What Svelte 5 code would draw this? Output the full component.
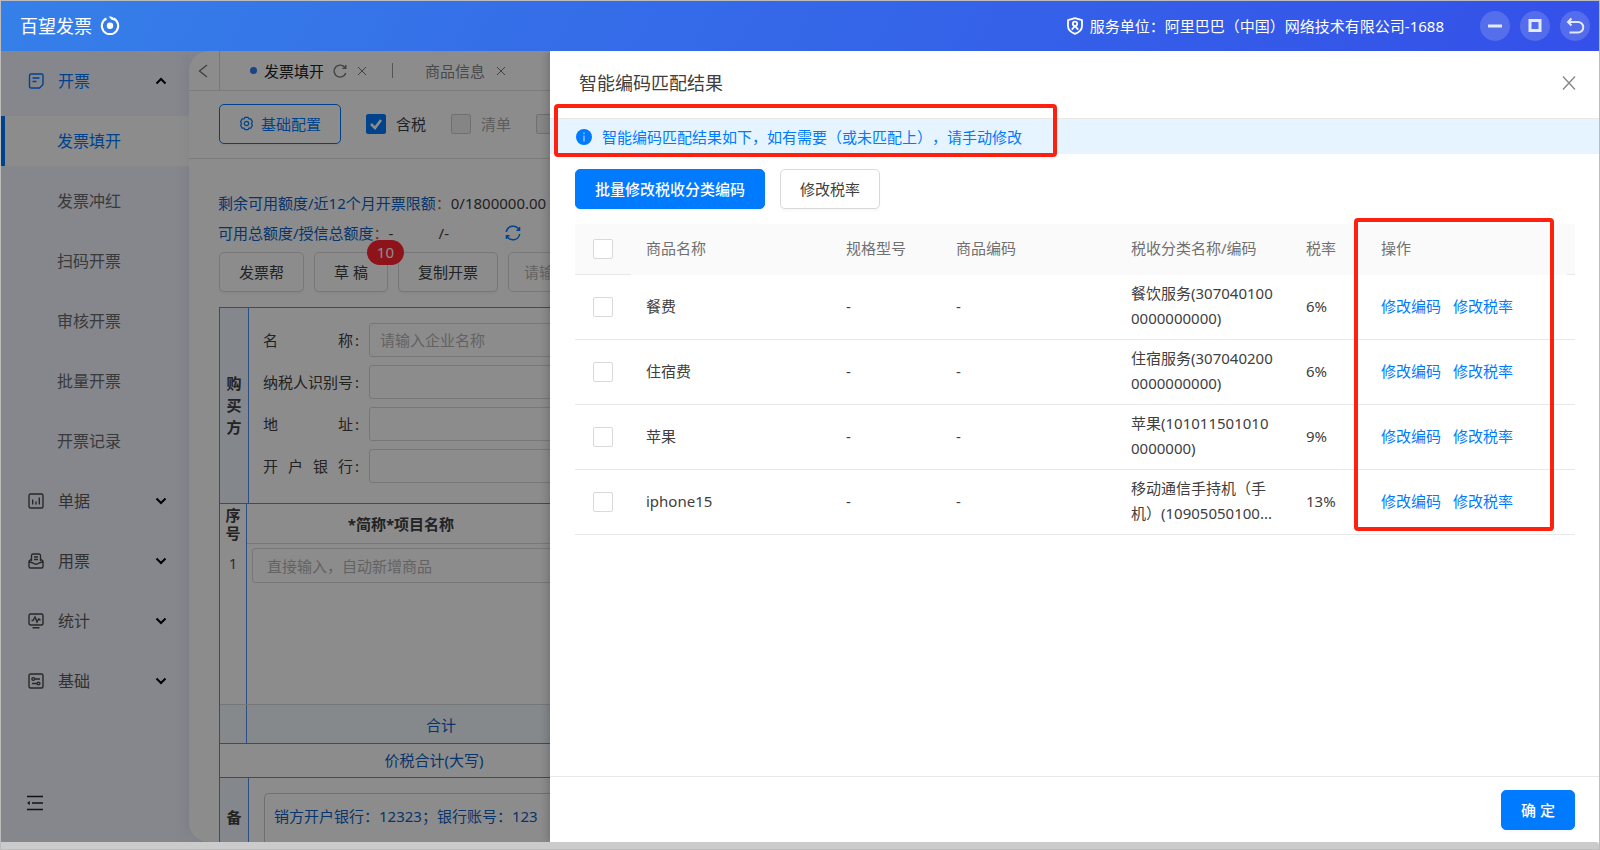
<script>
  const children = ['发票填开', '发票冲红', '扫码开票', '审核开票', '批量开票', '开票记录'];
  const groups = [
    { id: 'bill', label: '单据' },
    { id: 'ticket', label: '用票' },
    { id: 'stats', label: '统计' },
    { id: 'base', label: '基础' }
  ];
  const buyerFields = [
    { id: 'buyer-name', label: '名称', hint: '请输入企业名称' },
    { id: 'buyer-tax', label: '纳税人识别号', hint: '' },
    { id: 'buyer-addr', label: '地址', hint: '' },
    { id: 'buyer-bank', label: '开户银行', hint: '' }
  ];
  const rows = [
    { name: '餐费', code: '餐饮服务(3070401000000000000)', rate: '6%' },
    { name: '住宿费', code: '住宿服务(3070402000000000000)', rate: '6%' },
    { name: '苹果', code: '苹果(1010115010100000000)', rate: '9%' },
    { name: 'iphone15', code: '移动通信手持机（手机）(10905050100...', rate: '13%' }
  ];
</script>

<div class="window">
  <header class="topbar">
    <h1 class="brand">百望发票</h1>
    <svg class="brand-mark" viewBox="0 0 20 20" width="20" height="20">
      <path d="M6.500 2.500A8.200 8.200 0 1 0 13.500 2.500" fill="none" stroke="#fff" stroke-width="2" />
      <path d="M8.600 0.600c3 -.6 5.600.6 6 3.800l-3-.6z" fill="#fff" />
      <circle cx="10" cy="9.800" r="3.200" fill="#fff" />
    </svg>
    <div class="tenant">
      <svg viewBox="0 0 18 18" width="18" height="18" fill="none" stroke="#fff" stroke-width="1.800">
        <path d="M9 1.200 16 3.200V9c0 3.800-3 6.400-7 7.800C5 15.400 2 12.800 2 9V3.200z" stroke-linejoin="round" />
        <circle cx="9" cy="6.800" r="2.200" />
        <path d="M5.800 12.600 9 9l3.200 3.600" />
      </svg>
      <span>服务单位：阿里巴巴（中国）网络技术有限公司-1688</span>
    </div>
    <div class="win-actions">
      <button aria-label="最小化">
        <svg viewBox="0 0 30 30"><path d="M8 15h14" stroke-width="3" /></svg>
      </button>
      <button aria-label="最大化">
        <svg viewBox="0 0 30 30"><rect x="10" y="9.500" width="10" height="10" stroke-width="3" /></svg>
      </button>
      <button aria-label="返回">
        <svg viewBox="0 0 30 30"><path d="M11.500 7.500 8 11l3.500 3.500M8.500 11H18a5 5 0 0 1 0 10.500H9.500" stroke-width="2" /></svg>
      </button>
    </div>
  </header>

  <div class="body">
    <nav class="sidebar">
      <a class="group open" href="#invoice">
        <svg class="gicon" viewBox="0 0 16 16">
          <path d="M3 1h10.500a1.500 1.500 0 0 1 1.500 1.500v9L11.500 15H3a1.500 1.500 0 0 1-1.500-1.500v-11A1.500 1.500 0 0 1 3 1zM4.500 5h7M4.500 8.500h4" />
        </svg>
        <span>开票</span>
        <svg class="chev" viewBox="0 0 12 12"><path d="M1.500 8.500 6 4l4.500 4.500" /></svg>
      </a>
      {#each children as c, i}
        <a class="child" class:active={i === 0} href="#c{i}">{c}</a>
      {/each}
      {#each groups as g}
        <a class="group" href="#{g.id}">
          <svg class="gicon" viewBox="0 0 16 16">
            {#if g.id === 'bill'}
              <rect x="1" y="1" width="14" height="14" rx="1.500" />
              <path d="M4.700 6.500v5M8 8.500v3M11.300 4.500v7" />
            {:else if g.id === 'ticket'}
              <path d="M3.500 8V2.500a1.500 1.500 0 0 1 1.500-1.500h6a1.500 1.500 0 0 1 1.500 1.500V8M6 4h4M6 6.500h4" />
              <path d="M3.500 6 1 8v5.500A1.500 1.500 0 0 0 2.500 15h11a1.500 1.500 0 0 0 1.500-1.500V8l-2.500-2M1 8.500l4 1.500q3 2.500 6 0l4-1.500" />
            {:else if g.id === 'stats'}
              <rect x="1" y="1" width="14" height="11" rx="1.500" />
              <path d="M3.500 7.500h1.500L7 4l2 5 1.500-3 2 1M4.500 14.700h7" />
            {:else}
              <rect x="1" y="1" width="14" height="14" rx="1.500" />
              <circle cx="5.300" cy="6" r="1.400" /><path d="M6.700 6H12M4 10.500h5" /><circle cx="10.500" cy="10.500" r="1.400" />
            {/if}
          </svg>
          <span>{g.label}</span>
          <svg class="chev" viewBox="0 0 12 12"><path d="M1.500 3.500 6 8l4.500-4.500" /></svg>
        </a>
      {/each}
      <button class="fold" aria-label="收起菜单">
        <svg viewBox="0 0 16 16" width="16" height="16" fill="none" stroke="#222" stroke-width="1.400">
          <path d="M0 1.500h16M5 8h11M0 14.500h16" /><path d="M2.800 6v4L0 8z" fill="#222" stroke="none" />
        </svg>
      </button>
    </nav>

    <main class="content">
      <div class="tabs">
        <button class="back" aria-label="后退">
          <svg viewBox="0 0 10 14" width="10" height="14"><path d="M9 1 1.500 7 9 13" /></svg>
        </button>
        <div class="tab current">
          <i class="dot"></i>
          <span>发票填开</span>
          <svg viewBox="0 0 16 16" width="16" height="16"><path d="M13.800 10A6 6 0 1 1 13 4.600M13.800 2v3.400h-3.400" /></svg>
          <svg class="x" viewBox="0 0 10 10" width="10" height="10"><path d="M1 1l8 8M9 1 1 9" /></svg>
        </div>
        <i class="sep"></i>
        <div class="tab">
          <span>商品信息</span>
          <svg class="x" viewBox="0 0 10 10" width="10" height="10"><path d="M1 1l8 8M9 1 1 9" /></svg>
        </div>
      </div>

      <div class="toolbar">
        <button class="btn config">
          <svg viewBox="0 0 16 16" width="15" height="15" fill="none" stroke="#007aff" stroke-width="1.300">
            <path d="M6.200 1.500h3.600l.8 1.700 2-.1 1.700 3-1 1.900 1 1.900-1.700 3-2-.1-.8 1.700H6.200l-.8-1.700-2 .1-1.700-3 1-1.900-1-1.900 1.700-3 2 .1z" stroke-linejoin="round" />
            <circle cx="8" cy="8" r="2.300" />
          </svg>
          基础配置
        </button>
        <label class="opt"><input type="checkbox" checked />含税</label>
        <label class="opt off"><input type="checkbox" disabled />清单</label>
        <label class="opt off"><input type="checkbox" disabled aria-label="其他" /></label>
      </div>

      <div class="quota">
        <p><b>剩余可用额度/近12个月开票限额</b><em>：</em>0/1800000.00</p>
        <p>
          <b>可用总额度/授信总额度</b><em>：</em><span class="avail">-</span><span class="credit">/-</span>
          <svg viewBox="0 0 16 16" width="16" height="16" fill="none" stroke="#007aff" stroke-width="1.500">
            <path d="M1.300 7A6.800 6.800 0 0 1 14 4.800M14.700 9A6.800 6.800 0 0 1 2 11.200" /><path d="M14.500 2v3.200h-3M1.500 14v-3.200h3" />
          </svg>
        </p>
      </div>

      <div class="actions">
        <button class="btn">发票帮</button>
        <button class="btn draft">草 稿<span class="badge">10</span></button>
        <button class="btn">复制开票</button>
        <input class="field" placeholder="请输入" aria-label="搜索" />
      </div>

      <div class="invoice">
        <section class="party">
          <div class="side"><span>购买方</span></div>
          <div class="fields">
            {#each buyerFields as f}
              <div class="frow">
                <label for={f.id}>{f.label}</label><span class="colon">:</span>
                <input class="field" id={f.id} placeholder={f.hint} />
              </div>
            {/each}
          </div>
        </section>
        <section class="items">
          <div class="num"><strong>序号</strong><span>1</span></div>
          <div class="goods">
            <div class="ghead"><span>*简称*项目名称</span></div>
            <div class="gline"><input class="field" placeholder="直接输入，自动新增商品" aria-label="项目名称" /></div>
          </div>
        </section>
        <section class="total"><div class="num"></div><div class="sum"><span>合计</span></div></section>
        <section class="caps"><span>价税合计(大写)</span></section>
        <section class="remark">
          <div class="side"><span>备</span></div>
          <div class="note"><textarea aria-label="备注">销方开户银行：12323；银行账号：123</textarea></div>
        </section>
      </div>
    </main>

    <div class="mask"></div>

    <aside class="drawer">
      <div class="dhead">
        <h2>智能编码匹配结果</h2>
        <button aria-label="关闭">
          <svg viewBox="0 0 14 14" width="14" height="14"><path d="M1 .5l12 13M13 .5 1 13.500" /></svg>
        </button>
      </div>
      <div class="alert">
        <svg viewBox="0 0 16 16" width="16" height="16"><circle cx="8" cy="8" r="8" fill="#007aff" /><path d="M8 3.500v1.500M8 6.500v6" stroke="#8cc4ff" stroke-width="1.500" /></svg>
        <span>智能编码匹配结果如下，如有需要（或未匹配上），请手动修改</span>
      </div>
      <div class="dbody">
        <div class="dbtns">
          <button class="btn primary">批量修改税收分类编码</button>
          <button class="btn">修改税率</button>
        </div>
        <table>
          <colgroup>
            <col class="c-check" /><col /><col class="c-spec" /><col class="c-code" /><col class="c-code" /><col class="c-rate" /><col class="c-ops" /><col class="c-end" />
          </colgroup>
          <thead>
            <tr>
              <th class="pick"><input type="checkbox" aria-label="全选" /></th>
              <th>商品名称</th><th>规格型号</th><th>商品编码</th><th>税收分类名称/编码</th><th>税率</th><th>操作</th><th class="end"></th>
            </tr>
          </thead>
          <tbody>
            {#each rows as r}
              <tr>
                <td class="pick"><input type="checkbox" aria-label={r.name} /></td>
                <td>{r.name}</td><td>-</td><td>-</td>
                <td class="code">{r.code}</td>
                <td>{r.rate}</td>
                <td><div class="links"><a href="#code">修改编码</a><a href="#rate">修改税率</a></div></td>
                <td class="end"></td>
              </tr>
            {/each}
          </tbody>
        </table>
      </div>
      <div class="dfoot"><button class="btn primary">确 定</button></div>
      <div class="mark mark-alert"></div>
      <div class="mark mark-ops"></div>
    </aside>
  </div>
  <div class="scroll"></div>
</div>

<style>
  :global(body) { margin: 0; }
  .window, .window :is(button, input, textarea) {
    font-family: "Noto Sans", "Noto Sans CJK SC", sans-serif;
    font-size: 15px;
    text-spacing-trim: space-all;
  }
  .window {
    box-sizing: border-box;
    min-height: 100vh;
    display: flex;
    flex-direction: column;
    border: 1px solid #bcbcbc;
    line-height: 24px;
    color: #404040;
  }
  .window * { box-sizing: border-box; }
  h1, h2, p { margin: 0; font-weight: 400; }
  a { text-decoration: none; }
  button { border: 0; background: none; padding: 0; line-height: 22px; color: inherit; cursor: pointer; }
  svg { flex: none; display: block; }

  .topbar {
    height: 50px;
    display: flex;
    align-items: center;
    padding: 0 9px 0 19px;
    color: #fff;
    background: linear-gradient(120deg, #3580e9, #3570e8 30%, #3450e9);
  }
  .brand { font-size: 18px; }
  .brand-mark { margin-left: 8px; }
  .tenant { margin-left: auto; display: flex; align-items: center; gap: 6px; }
  .win-actions { display: flex; gap: 10px; margin-left: 36px; }
  .win-actions button { width: 30px; height: 30px; border-radius: 50%; background: rgba(255, 255, 255, 0.16); }
  .win-actions svg { width: 30px; height: 30px; fill: none; stroke: #e6e9fc; }

  .body { position: relative; flex: 1; display: flex; overflow: hidden; background: #f2f5ff; }

  .sidebar {
    width: 188px;
    flex: none;
    display: flex;
    flex-direction: column;
    font-size: 16px;
    background: linear-gradient(90deg, #f3f6ff 92%, #edf2fd);
  }
  .group { height: 60px; display: flex; align-items: center; padding: 0 22px 0 27px; color: #5c5c5c; }
  .gicon { width: 16px; height: 16px; margin-right: 14px; fill: none; stroke: #4a4a4a; stroke-width: 1.4; }
  .chev { width: 12px; height: 12px; margin-left: auto; fill: none; stroke: #000; stroke-width: 2; }
  .open { color: #007aff; }
  .open .gicon { stroke: #007aff; }
  .child { height: 50px; margin: 5px 0; padding-left: 56px; line-height: 50px; color: #6a6a6a; }
  .active { background: #fff; border-left: 4px solid #007aff; padding-left: 52px; color: #007aff; }
  .fold { margin: auto 0 31px 26px; width: 16px; }

  .content {
    flex: 1;
    min-width: 0;
    display: flex;
    flex-direction: column;
    background: #fff;
    border-radius: 20px 0 0 20px;
    box-shadow: 0 0 12px rgba(90, 120, 180, 0.12);
  }
  .tabs { height: 40px; display: flex; align-items: center; border-bottom: 1px solid #e0e0e0; line-height: 22px; }
  .tabs svg { fill: none; stroke: #777; stroke-width: 1.4; }
  .tabs .x { stroke-width: 1; }
  .back { width: 31px; height: 39px; display: flex; align-items: center; padding-left: 9px; border-right: 1px solid #d9d9d9; }
  .tab { display: flex; align-items: center; color: #888; padding-left: 32px; }
  .current { padding-left: 30px; color: #222; }
  .dot { width: 7px; height: 7px; margin-right: 7px; border-radius: 50%; background: #2f7bf5; }
  .current span { margin-right: 8px; }
  .current .x { margin-left: 9px; }
  .tab:not(.current) .x { margin-left: 11px; }
  .sep { width: 1px; height: 15px; margin-left: 25px; background: #999; }

  .btn {
    height: 40px;
    padding: 0 19px;
    border: 1px solid #d9d9d9;
    border-radius: 5px;
    background: #fff;
    color: #404040;
    box-shadow: 0 2px 2px rgba(0, 0, 0, 0.03);
    white-space: nowrap;
  }
  .primary { border-color: #007aff; background: #007aff; color: #fff; font-weight: 500; }

  .toolbar { height: 68px; flex: none; display: flex; align-items: center; gap: 25px; padding: 0 0 2px 30px; border-bottom: 1px solid #e0e0e0; }
  .config { display: flex; align-items: center; gap: 7px; border-color: #007aff; color: #007aff; }
  .opt { display: flex; align-items: center; gap: 10px; }
  .off { color: #aaa; }
  input[type="checkbox"] {
    appearance: none;
    flex: none;
    width: 20px;
    height: 20px;
    margin: 0;
    border: 1px solid #d9d9d9;
    border-radius: 2px;
    background: #fff;
  }
  input[type="checkbox"]:disabled { background: #f2f2f2; border-color: #ccc; }
  input[type="checkbox"]:checked {
    border-color: #007aff;
    background: #007aff url("data:image/svg+xml,%3Csvg xmlns='http://www.w3.org/2000/svg' viewBox='0 0 18 18'%3E%3Cpath d='M4 9l4 4 6-8' fill='none' stroke='white' stroke-width='2.6'/%3E%3C/svg%3E") center / 18px;
  }

  .quota { padding: 29px 0 0 29px; }
  .quota p { height: 30px; display: flex; align-items: center; white-space: nowrap; }
  .quota b { font-weight: 400; color: #0d62c4; }
  .quota em { font-style: normal; color: #c06a30; }
  .avail { width: 50px; }
  .credit { width: 66px; }

  .actions { display: flex; gap: 10px; padding: 4px 0 0 30px; }
  .draft { position: relative; }
  .badge {
    position: absolute;
    top: -13px;
    right: -17px;
    width: 37px;
    height: 25px;
    border-radius: 13px;
    background: #ff2630;
    color: #fff;
    line-height: 25px;
  }
  .field { border: 1px solid #d9d9d9; border-radius: 3px; background: #fff; padding: 0 10px; color: #404040; min-width: 0; }
  .field::placeholder { color: #b4b4b4; opacity: 1; }
  .actions .field { flex: 1; height: 40px; padding: 0 15px; border-radius: 5px; }

  .invoice { flex: 1; display: flex; flex-direction: column; margin: 15px 20px 0 30px; border: 1px solid #4f8ff0; border-bottom: 0; }
  .side { width: 29px; flex: none; display: flex; align-items: center; justify-content: center; border-right: 1px solid #4f8ff0; background: #f0f6ff; }
  .side span { width: 15px; font-weight: 700; line-height: 22px; }
  .party { height: 196px; display: flex; border-bottom: 1px solid #4f8ff0; }
  .party .side { padding-bottom: 2px; }
  .fields { flex: 1; display: flex; flex-direction: column; gap: 8px; padding: 15px 14px 0; }
  .frow { display: flex; align-items: center; height: 34px; line-height: 22px; }
  .frow label { width: 90px; text-align: justify; text-align-last: justify; }
  .colon { width: 16px; padding-left: 2px; }
  .frow .field { flex: 1; height: 34px; }

  .items { height: 200px; display: flex; }
  .num { width: 27px; flex: none; display: flex; flex-direction: column; align-items: center; border-right: 1px solid #4f8ff0; }
  .num strong { width: 15px; padding-top: 2px; line-height: 18px; }
  .num span { margin-top: 9px; color: #555; }
  .goods { flex: 1; }
  .ghead { height: 40px; border-bottom: 1px solid #d9d9d9; line-height: 40px; font-weight: 700; }
  .ghead span { display: block; width: 308px; text-align: center; }
  .gline { display: flex; padding: 4px 5px; }
  .gline .field { flex: 1; height: 35px; padding: 0 14px; }
  .total { height: 40px; display: flex; border-top: 1px solid #d9d9d9; border-bottom: 1px solid #4f8ff0; background: #f5faff; color: #0d62c4; line-height: 40px; }
  .sum span { display: block; width: 388px; text-align: center; }
  .caps { height: 34px; border-bottom: 1px solid #4f8ff0; color: #0d62c4; line-height: 32px; }
  .caps span { display: block; width: 428px; text-align: center; }
  .remark { flex: 1; display: flex; }
  .remark .side { padding-top: 14px; }
  .note { flex: 1; display: flex; padding: 15px 15px 0; }
  .note textarea { flex: 1; height: 49px; padding: 10px 9px; border: 1px solid #ccc; border-bottom: 0; border-radius: 5px 5px 0 0; line-height: 24px; color: #0d62c4; resize: none; overflow: hidden; }

  .mask { position: absolute; inset: 0; background: rgba(0, 0, 0, 0.45); }

  .drawer {
    position: absolute;
    top: 0;
    right: 0;
    bottom: 0;
    width: calc(100% - 549px);
    display: flex;
    flex-direction: column;
    background: #fff;
    box-shadow: -2px 0 8px rgba(0, 0, 0, 0.2);
  }
  .dhead { height: 68px; display: flex; align-items: center; justify-content: space-between; padding: 0 23px 3px 29px; border-bottom: 1px solid #e8e8e8; }
  .dhead h2 { font-size: 18px; }
  .dhead svg { fill: none; stroke: #888; stroke-width: 1.4; }
  .alert { height: 35px; display: flex; align-items: center; gap: 10px; padding-left: 26px; background: #e6f4ff; color: #007aff; }
  .dbody { flex: 1; padding: 15px 24px 0 25px; }
  .dbtns { display: flex; gap: 15px; margin-bottom: 15px; }

  table { width: 100%; table-layout: fixed; border-collapse: separate; border-spacing: 0; }
  .c-check { width: 56px; }
  .c-spec { width: 110px; }
  .c-code { width: 175px; }
  .c-rate { width: 75px; }
  .c-ops { width: 201px; }
  .c-end { width: 8px; }
  th, td { padding: 6px 15px 8px; text-align: left; font-weight: 400; line-height: 25px; }
  th { height: 51px; padding: 0 15px 2px; background: #fafafa; color: #707070; }
  th.pick, th.end { border-bottom: 1px solid #e8e8e8; }
  td { height: 65px; border-bottom: 1px solid #e8e8e8; }
  .pick, .end { padding: 0; }
  .pick input { display: block; margin: 0 auto; }
  .code { word-break: break-all; }
  .links { display: flex; gap: 12px; white-space: nowrap; }
  .links a { color: #007aff; }

  .dfoot { height: 66px; display: flex; justify-content: flex-end; padding: 13px 24px 0 0; border-top: 1px solid #e8e8e8; }

  .mark { position: absolute; border: 4px solid #ff2010; border-radius: 4px; pointer-events: none; }
  .mark-alert { left: 4px; top: 53px; width: 503px; height: 53px; }
  .mark-ops { right: 45px; top: 167px; width: 200px; height: 313px; }

  .scroll { height: 7px; flex: none; background: #cbcbcb; border-radius: 0 3px 0 0; }
</style>
